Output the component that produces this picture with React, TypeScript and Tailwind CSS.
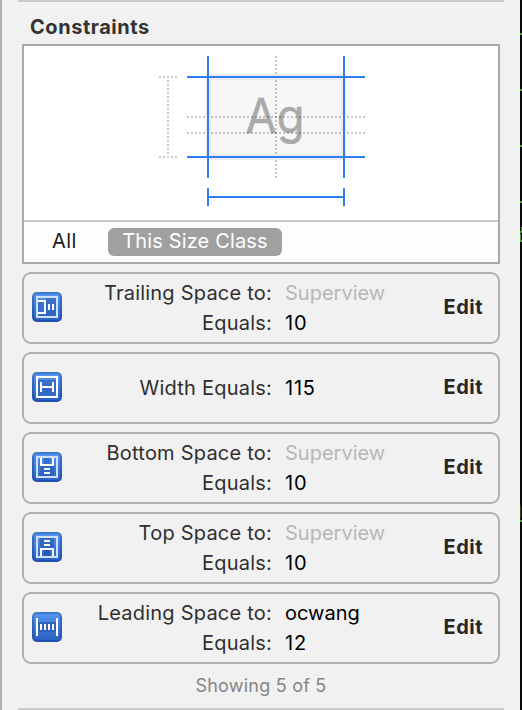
import React from "react";

type IconKind = "trailing" | "width" | "bottom" | "top" | "leading";

function ConstraintIcon({ kind }: { kind: IconKind }) {
  const id = `grad-${kind}`;
  const framed = kind !== "leading";
  return (
    <svg width="30" height="30" viewBox="0 0 30 30" className="mb-0.5 shrink-0" shapeRendering="crispEdges">
      <defs>
        <linearGradient id={id} x1="0" y1="0" x2="0" y2="1">
          <stop offset="0" stopColor="#5593ec" />
          <stop offset="1" stopColor="#2a61c2" />
        </linearGradient>
        <linearGradient id={`${id}-edge`} x1="0" y1="0" x2="0" y2="1">
          <stop offset="0" stopColor="#3f78cf" />
          <stop offset="1" stopColor="#204fa5" />
        </linearGradient>
      </defs>
      <rect width="30" height="30" rx="5" fill={`url(#${id}-edge)`} shapeRendering="auto" />
      <rect x="2" y="2" width="26" height="26" rx="3" fill={`url(#${id})`} shapeRendering="auto" />
      {framed && (
        <rect x="5" y="5" width="20" height="20" fill="none" strokeWidth="2" stroke={kind === "width" ? "#ffffff" : "#cfdff7"} />
      )}
      {kind === "trailing" && (
        <g>
          <path d="M6 6h18v18h-10V6z" fill="#2d60b8" opacity=".6" />
          <path d="M6 10h6v10H6z" fill="#3770cc" />
          <path d="M6 8h8v14H6v-2h6V10H6zM16 12h2v6h-2zM20 12h2v6h-2z" fill="#fff" />
        </g>
      )}
      {kind === "width" && (
        <g>
          <path d="M6 8h18v14H6z" fill="#2d60b8" opacity=".6" />
          <path d="M8 10h2v4h10v-4h2v10h-2v-4H10v4H8z" fill="#fff" />
        </g>
      )}
      {kind === "bottom" && (
        <g>
          <path d="M8 14h14v10H8z" fill="#2d60b8" opacity=".75" />
          <path d="M12 6h6v6h-6z" fill="#356dca" />
          <path d="M8 6h2v6h10V6h2v8H8zM12 16h6v2h-6zM12 20h6v2h-6z" fill="#fff" />
        </g>
      )}
      {kind === "top" && (
        <g>
          <path d="M8 6h14v10H8z" fill="#2d60b8" opacity=".75" />
          <path d="M12 18h6v6h-6z" fill="#285ab4" />
          <path d="M8 24v-8h14v8h-2v-6H10v6zM12 8h6v2h-6zM12 12h6v2h-6z" fill="#fff" />
        </g>
      )}
      {kind === "leading" && (
        <g>
          <path d="M6 10h18v10H6z" fill="#2556ae" opacity=".65" />
          <path d="M4 6h2v18H4zM24 6h2v18h-2zM8 12h2v6H8zM12 12h2v6h-2zM16 12h2v6h-2zM20 12h2v6h-2z" fill="#fff" />
        </g>
      )}
    </svg>
  );
}

function Diagram() {
  return (
    <svg width="474" height="174" viewBox="24 46 474 174" className="block">
      <rect x="205.5" y="74" width="141" height="86" rx="5" fill="#ececec" />
      <rect x="211" y="80" width="130" height="74" rx="3" fill="#f7f7f7" />
      <text x="245.5" y="133" fontSize="48" textLength="59" lengthAdjust="spacingAndGlyphs" fill="#aaaaaa" stroke="#aaaaaa" strokeWidth=".5" className="font-[Inter,sans-serif]">
        Ag
      </text>
      <g stroke="#000" strokeOpacity=".21" strokeWidth="2" strokeDasharray="2 2" fill="none">
        <path d="M276 56V178" />
        <path d="M187 117H365" />
        <path d="M187 133H365" />
        <path d="M159 77H177" />
        <path d="M159 157H177" />
        <path d="M168 80V155" />
      </g>
      <path
        d="M208 56V178M344 56V178M187 77H365M187 157H365M208 188V206M344 188V206M208 197H344"
        stroke="#2f7cf6"
        strokeWidth="2"
        fill="none"
      />
    </svg>
  );
}

interface Line {
  label: string;
  value: string;
  dim?: boolean;
}

const rows: { kind: IconKind; lines: Line[] }[] = [
  { kind: "trailing", lines: [{ label: "Trailing Space to:", value: "Superview", dim: true }, { label: "Equals:", value: "10" }] },
  { kind: "width", lines: [{ label: "Width Equals:", value: "115" }] },
  { kind: "bottom", lines: [{ label: "Bottom Space to:", value: "Superview", dim: true }, { label: "Equals:", value: "10" }] },
  { kind: "top", lines: [{ label: "Top Space to:", value: "Superview", dim: true }, { label: "Equals:", value: "10" }] },
  { kind: "leading", lines: [{ label: "Leading Space to:", value: "ocwang" }, { label: "Equals:", value: "12" }] },
];

function ConstraintRow({ kind, lines }: { kind: IconKind; lines: Line[] }) {
  return (
    <div className="flex h-[72px] items-center rounded-[9px] border-2 border-[#b1b1b1] pr-[15px] pl-2">
      <ConstraintIcon kind={kind} />
      <div className="flex-1">
        {lines.map((l) => (
          <div key={l.label} className="flex h-[30px] items-center gap-[13px] leading-[30px]">
            <span className="w-[210px] text-right tracking-[0.22px] whitespace-nowrap text-[#2f2f2f]">{l.label}</span>
            <span className={l.dim ? "text-[#b8b8b8]" : /^\d+$/.test(l.value) ? "tracking-[0.8px] text-black" : "text-black"}>
              {l.value}
            </span>
          </div>
        ))}
      </div>
      <span className="mb-0.5 font-bold tracking-[0.5px] text-[#262626]">Edit</span>
    </div>
  );
}

export default function App() {
  return (
    <div className="flex h-[710px] w-[522px] overflow-hidden bg-[#f1f1f1] font-[Inter,sans-serif] text-[20px]">
      <div className="w-[2px] bg-[#b1b1b1]" />
      <div className="flex w-[518px] flex-col pr-4 pl-4">
        <div className="h-[2px] shrink-0 bg-[#cacaca]" />
        <h2 className="h-[42px] shrink-0 pt-[10px] pl-3 leading-[30px] font-bold tracking-[0.55px] text-[#333]">Constraints</h2>
        <div className="mr-1 ml-1 h-[220px] shrink-0 border-2 border-[#a8a8a8] bg-white">
          <Diagram />
          <div className="flex h-[42px] items-center border-t-2 border-[#cacaca] bg-[#fdfdfd] pl-7">
            <span className="mb-0.5 w-[56px] tracking-[0.4px] text-[#1c1c1c]">All</span>
            <span className="flex h-7 w-[174px] items-center justify-center rounded-md bg-[#a0a0a0] pb-0.5 tracking-[0.14px] whitespace-nowrap text-white">
              This Size Class
            </span>
          </div>
        </div>
        <div className="mx-1 mt-2 flex flex-col gap-2">
          {rows.map((r) => (
            <ConstraintRow key={r.kind} {...r} />
          ))}
        </div>
        <div className="flex h-[44px] shrink-0 items-center justify-center pb-0.5 text-[18px] tracking-[0.22px] text-[#858585]">
          Showing 5 of 5
        </div>
        <div className="h-[2px] shrink-0 bg-[#cacaca]" />
      </div>
      <svg width="2" height="710" viewBox="0 0 2 710" className="shrink-0">
        <rect width="2" height="710" fill="#080a08" />
        <path d="M0 33h2v2H0zM0 89h2v2H0zM0 145h2v2H0zM0 201h2v2H0zM1 227h1v4H1zM0 231h2v2H0zM0 234h1v6H0zM0 240h2v2H0zM0 520h2v2H0z" fill="#4a9e32" />
        <path d="M0 505h1v14H0z" fill="#3c4010" />
      </svg>
    </div>
  );
}
